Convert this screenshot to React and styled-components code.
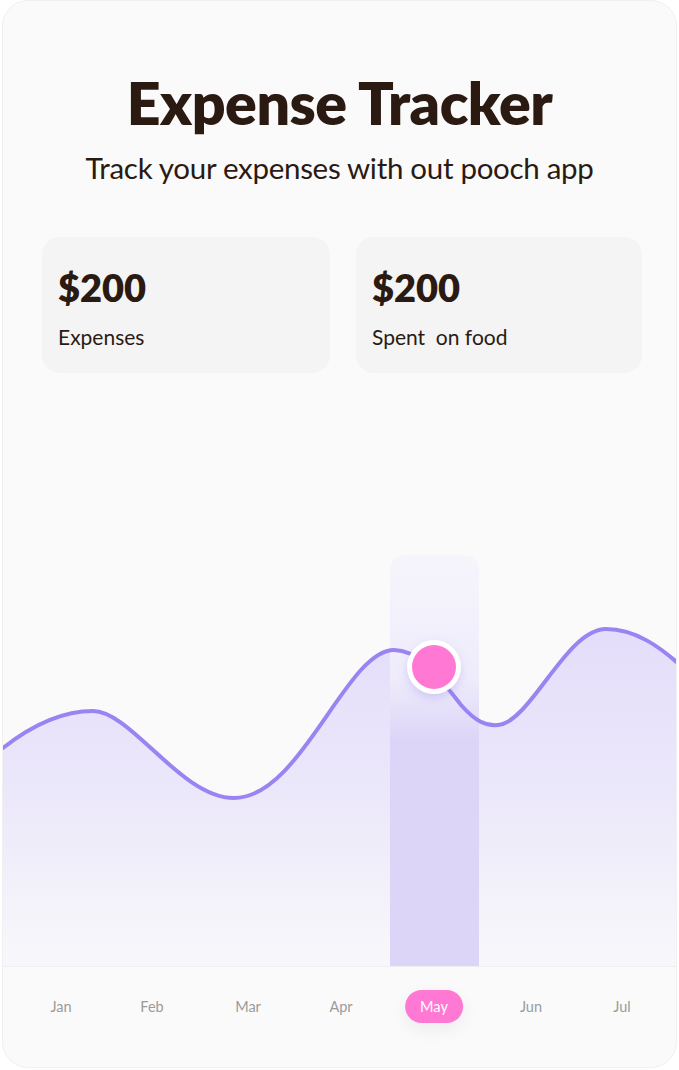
import React from "react";
import styled, { createGlobalStyle } from "styled-components";

const Global = createGlobalStyle`
  html, body { margin: 0; padding: 0; background: #ffffff; }
  body { font-family: "Lato", "Liberation Sans", sans-serif; }
`;

const Card = styled.div`
  box-sizing: border-box;
  width: 675px;
  height: 1068px;
  margin: 0 auto;
  background: #fafafa;
  border: 1px solid #f0f0f0;
  border-radius: 26px;
  overflow: hidden;
  display: flex;
  flex-direction: column;
`;

const Header = styled.header`
  display: flex;
  flex-direction: column;
  align-items: center;
  padding-top: 66px;
`;

const Title = styled.h1`
  margin: 0;
  font-size: 59px;
  line-height: 72px;
  font-weight: 800;
  color: #2b1a12;
  letter-spacing: -0.5px;
`;

const Subtitle = styled.p`
  margin: 12px 0 0;
  font-size: 29.5px;
  line-height: 34px;
  font-weight: 400;
  color: #2b1a12;
  letter-spacing: -0.3px;
`;

const Stats = styled.div`
  display: grid;
  grid-template-columns: 288px 286px;
  gap: 26px;
  padding: 0 0 0 39px;
  margin-top: 52px;
`;

const StatCard = styled.div`
  height: 136px;
  border-radius: 18px;
  background: #f4f4f4;
  padding: 30px 16px 0;
  box-sizing: border-box;
`;

const Amount = styled.div`
  font-size: 38px;
  line-height: 40px;
  font-weight: 800;
  color: #2b1a12;
`;

const Label = styled.div`
  margin-top: 17px;
  font-size: 21px;
  line-height: 26px;
  color: #2b1a12;
  white-space: pre;
`;

const ChartWrap = styled.div`
  margin-top: 167px;
  height: 426px;
`;

const Months = styled.div`
  height: 80px;
  border-top: 1.5px solid #efeff2;
  position: relative;
`;

const Month = styled.div`
  position: absolute;
  top: 23px;
  transform: translateX(-50%);
  height: 33px;
  padding: 0 ${(p) => (p.$active ? 15 : 0)}px;
  border-radius: 17px;
  display: flex;
  align-items: center;
  font-size: 14.5px;
  color: ${(p) => (p.$active ? "#ffffff" : "#9b9b9b")};
  background: ${(p) => (p.$active ? "#ff78d3" : "transparent")};
  box-shadow: ${(p) => (p.$active ? "0 6px 18px rgba(0,0,0,0.06)" : "none")};
`;

const months = [
  ["Jan", 58],
  ["Feb", 149],
  ["Mar", 245],
  ["Apr", 338],
  ["May", 431, true],
  ["Jun", 528],
  ["Jul", 619],
];

const linePath =
  "M0,208 C33,182 63,171 90,171 C128,171 178,258 231,258 C298,258 343,110 391,110 C418,110 438,140 458,165 C473,182 483,186 495,185 C528,182 563,89 603,89 C633,89 658,108 677,125";

function Chart() {
  return (
    <svg width="675" height="426" viewBox="0 0 675 426">
      <defs>
        <linearGradient id="fillG" x1="0" y1="89" x2="0" y2="426" gradientUnits="userSpaceOnUse">
          <stop offset="0" stopColor="#e4ddfb" />
          <stop offset="0.5" stopColor="#ece8fa" />
          <stop offset="1" stopColor="#f8f8fb" />
        </linearGradient>
        <linearGradient id="barG" x1="0" y1="15" x2="0" y2="426" gradientUnits="userSpaceOnUse">
          <stop offset="0" stopColor="#f6f5fb" />
          <stop offset="0.3" stopColor="#efecfb" />
          <stop offset="0.45" stopColor="#dcd5f8" />
          <stop offset="1" stopColor="#dcd5f8" />
        </linearGradient>
        <filter id="dotShadow" x="-50%" y="-50%" width="200%" height="200%">
          <feDropShadow dx="0" dy="4" stdDeviation="5" floodColor="#7d66e0" floodOpacity="0.25" />
        </filter>
      </defs>
      <path d={linePath + " L677,426 L0,426 Z"} fill="url(#fillG)" />
      <path d="M387,426 L387,31 Q387,15 403,15 L460,15 Q476,15 476,31 L476,426 Z" fill="url(#barG)" />
      <path d={linePath} fill="none" stroke="#9a84f2" strokeWidth="4" strokeLinecap="round" />
      <circle cx="431" cy="127" r="27" fill="#ffffff" filter="url(#dotShadow)" />
      <circle cx="431" cy="127" r="22" fill="#ff78d3" />
    </svg>
  );
}

export default function App() {
  return (
    <>
      <Global />
      <Card>
        <Header>
          <Title>Expense Tracker</Title>
          <Subtitle>Track your expenses with out pooch app</Subtitle>
        </Header>
        <Stats>
          <StatCard>
            <Amount>$200</Amount>
            <Label>Expenses</Label>
          </StatCard>
          <StatCard>
            <Amount>$200</Amount>
            <Label>{"Spent  on food"}</Label>
          </StatCard>
        </Stats>
        <ChartWrap>
          <Chart />
        </ChartWrap>
        <Months>
          {months.map(([m, x, a]) => (
            <Month key={m} $active={a} style={{ left: x }}>
              {m}
            </Month>
          ))}
        </Months>
      </Card>
    </>
  );
}
